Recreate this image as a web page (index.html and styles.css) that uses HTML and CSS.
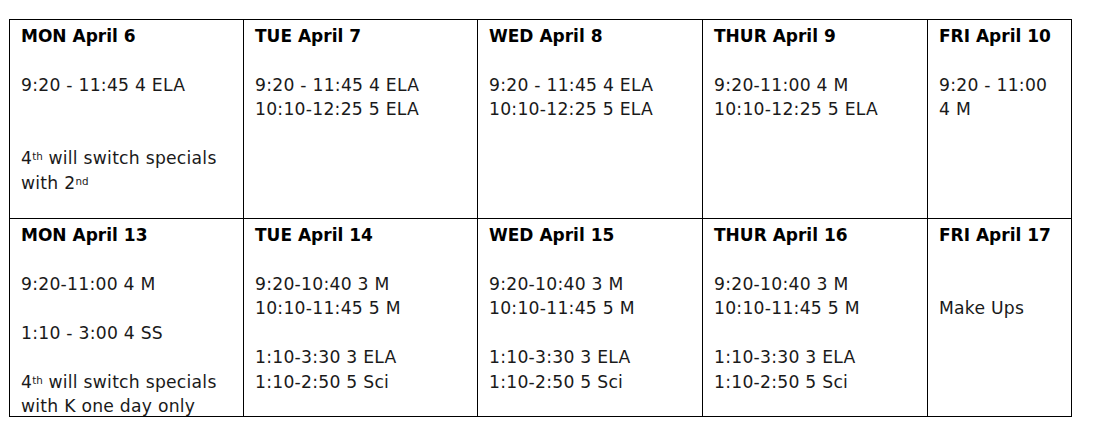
FILE: index.html
```html
<!DOCTYPE html>
<html lang="en">
<head>
<meta charset="utf-8">
<title>Schedule</title>
<link rel="stylesheet" href="styles.css">
</head>
<body>
<div class="schedule">
  <div class="cell">
    <h3 class="day">MON April 6</h3>
    <p class="gap1">9:20 - 11:45 4 ELA</p>
    <p class="gap2"><span>4</span><sup>th</sup><span> will switch specials</span><br><span>with 2</span><sup>nd</sup></p>
  </div>
  <div class="cell">
    <h3 class="day">TUE April 7</h3>
    <p class="gap1">9:20 - 11:45 4 ELA<br>10:10-12:25 5 ELA</p>
  </div>
  <div class="cell">
    <h3 class="day">WED April 8</h3>
    <p class="gap1">9:20 - 11:45 4 ELA<br>10:10-12:25 5 ELA</p>
  </div>
  <div class="cell">
    <h3 class="day">THUR April 9</h3>
    <p class="gap1">9:20-11:00 4 M<br>10:10-12:25 5 ELA</p>
  </div>
  <div class="cell">
    <h3 class="day">FRI April 10</h3>
    <p class="gap1">9:20 - 11:00<br>4 M</p>
  </div>

  <div class="cell">
    <h3 class="day">MON April 13</h3>
    <p class="gap1">9:20-11:00 4 M</p>
    <p class="gap1">1:10 - 3:00 4 SS</p>
    <p class="gap1"><span>4</span><sup>th</sup><span> will switch specials</span><br><span>with K one day only</span></p>
  </div>
  <div class="cell">
    <h3 class="day">TUE April 14</h3>
    <p class="gap1">9:20-10:40 3 M<br>10:10-11:45 5 M</p>
    <p class="gap1">1:10-3:30 3 ELA<br>1:10-2:50 5 Sci</p>
  </div>
  <div class="cell">
    <h3 class="day">WED April 15</h3>
    <p class="gap1">9:20-10:40 3 M<br>10:10-11:45 5 M</p>
    <p class="gap1">1:10-3:30 3 ELA<br>1:10-2:50 5 Sci</p>
  </div>
  <div class="cell">
    <h3 class="day">THUR April 16</h3>
    <p class="gap1">9:20-10:40 3 M<br>10:10-11:45 5 M</p>
    <p class="gap1">1:10-3:30 3 ELA<br>1:10-2:50 5 Sci</p>
  </div>
  <div class="cell">
    <h3 class="day">FRI April 17</h3>
    <p class="gap2">Make Ups</p>
  </div>
</div>
</body>
</html>
```
FILE: styles.css
```css
html, body {
  background: #fff;
}
body {
  margin: 0;
  padding: 19px 0 0 9px;
  font-family: "DejaVu Sans", "Liberation Sans", sans-serif;
  font-size: 17.2px;
  line-height: 24.5px;
  color: #1a1a1a;
}
.schedule {
  display: grid;
  grid-template-columns: 234px 234px 225px 225px 144px;
  grid-template-rows: 199px 198px;
  width: max-content;
  border-left: 1px solid #000;
  border-top: 1px solid #000;
}
.cell {
  border-right: 1px solid #000;
  border-bottom: 1px solid #000;
  padding: 3.5px 10px 0 11px;
}
.day {
  margin: 0;
  font-size: 17px;
  font-weight: bold;
  color: #000;
}
p {
  margin: 0;
  letter-spacing: 0.25px;
  white-space: nowrap;
}
.gap1 {
  margin-top: 24.5px;
}
.gap2 {
  margin-top: 49px;
}
sup {
  font-size: 0.6em;
  line-height: 0;
  vertical-align: 0.42em;
  letter-spacing: 0;
}
```
